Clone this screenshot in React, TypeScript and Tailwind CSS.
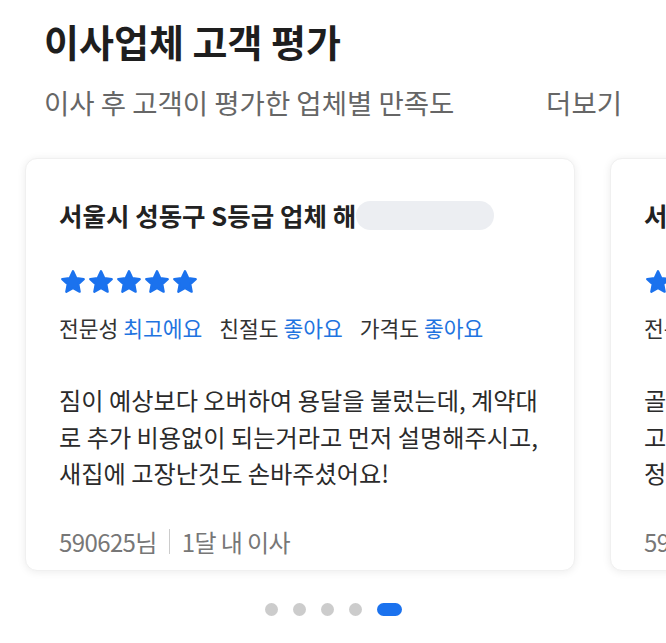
const FONT = { fontFamily: '"Noto Sans CJK KR", "Noto Sans", sans-serif' };

function Stars({ count = 5 }: { count?: number }) {
  return (
    <div className="flex">
      {Array.from({ length: count }).map((_, i) => (
        <svg key={i} viewBox="0 0 24 24" className="w-[28px] h-[28px]" fill="#1b72ee" stroke="#1b72ee" strokeWidth={2} strokeLinejoin="round">
          <path d="M12 2.8l2.8 5.9 6.4.8-4.7 4.4 1.2 6.4L12 17.2l-5.7 3.1 1.2-6.4-4.7-4.4 6.4-.8z" />
        </svg>
      ))}
    </div>
  );
}

interface Review {
  title: string;
  ratings: [string, string][];
  lines: string[];
  user: string;
  when: string;
}

const reviews: Review[] = [
  {
    title: '서울시 성동구 S등급 업체 해',
    ratings: [
      ['전문성', '최고에요'],
      ['친절도', '좋아요'],
      ['가격도', '좋아요'],
    ],
    lines: [
      '짐이 예상보다 오버하여 용달을 불렀는데, 계약대',
      '로 추가 비용없이 되는거라고 먼저 설명해주시고,',
      '새집에 고장난것도 손바주셨어요!',
    ],
    user: '590625님',
    when: '1달 내 이사',
  },
  {
    title: '서울시 강남구 S등급 업체 친',
    ratings: [
      ['전문성', '최고에요'],
      ['친절도', '최고에요'],
      ['가격도', '좋아요'],
    ],
    lines: [
      '골목이 좁아서 걱정했는데 꼼꼼하게 옮겨주셨고',
      '고객 입장에서 하나하나 신경 써주셔서 감사해요.',
      '정리까지 깔끔하게 해주셨어요!',
    ],
    user: '591102님',
    when: '1달 내 이사',
  },
];

function ReviewCard({ r }: { r: Review }) {
  return (
    <div className="w-[550px] shrink-0 h-[413px] rounded-[12px] bg-white border border-[#f0f0f0] shadow-[0_1px_8px_rgba(0,0,0,0.08)] px-[33px] pt-[39px]">
      <div className="flex items-center h-[34px]">
        <span className="text-[25.5px] font-bold text-[#222] whitespace-nowrap">{r.title}</span>
        <span className="w-[138px] h-[29px] shrink-0 rounded-full bg-[#eceef2]" />
      </div>
      <div className="mt-[36px]">
        <Stars />
      </div>
      <div className="mt-[18px] flex gap-[17px] text-[21.5px] leading-[28px]">
        {r.ratings.map(([k, v]) => (
          <span key={k} className="whitespace-nowrap">
            <span className="text-[#333]">{k}</span> <span className="text-[#1f74e0]">{v}</span>
          </span>
        ))}
      </div>
      <div className="mt-[40px] text-[24.2px] leading-[36.5px] text-[#2b2b2b]">
        {r.lines.map((l, i) => (
          <div key={i} className="whitespace-nowrap">{l}</div>
        ))}
      </div>
      <div className="mt-[35px] flex items-center h-[30px] text-[24px] text-[#777] tracking-[-0.6px]">
        <span>{r.user}</span>
        <span className="mx-[12px] w-px h-[25px] bg-[#ccc]" />
        <span>{r.when}</span>
      </div>
    </div>
  );
}

export default function App() {
  return (
    <div className="w-[666px] h-[643px] bg-white overflow-hidden" style={FONT}>
      <div className="px-[44px] pt-[15px]">
        <h1 className="text-[38px] font-bold text-[#1e1e1e] leading-[52px]">이사업체 고객 평가</h1>
        <div className="mt-[15px] flex items-center justify-between text-[27.5px] text-[#666] leading-[40px]">
          <span>이사 후 고객이 평가한 업체별 만족도</span>
          <span>더보기</span>
        </div>
      </div>
      <div className="mt-[36px] flex gap-[35px] pl-[25px]">
        {reviews.map((r, i) => (
          <ReviewCard key={i} r={r} />
        ))}
      </div>
      <div className="mt-[32px] flex justify-center items-center gap-[15px]">
        <span className="w-[13px] h-[13px] rounded-full bg-[#cccccc]" />
        <span className="w-[13px] h-[13px] rounded-full bg-[#cccccc]" />
        <span className="w-[13px] h-[13px] rounded-full bg-[#cccccc]" />
        <span className="w-[13px] h-[13px] rounded-full bg-[#cccccc]" />
        <span className="w-[25px] h-[13px] rounded-full bg-[#1b72ee]" />
      </div>
    </div>
  );
}
